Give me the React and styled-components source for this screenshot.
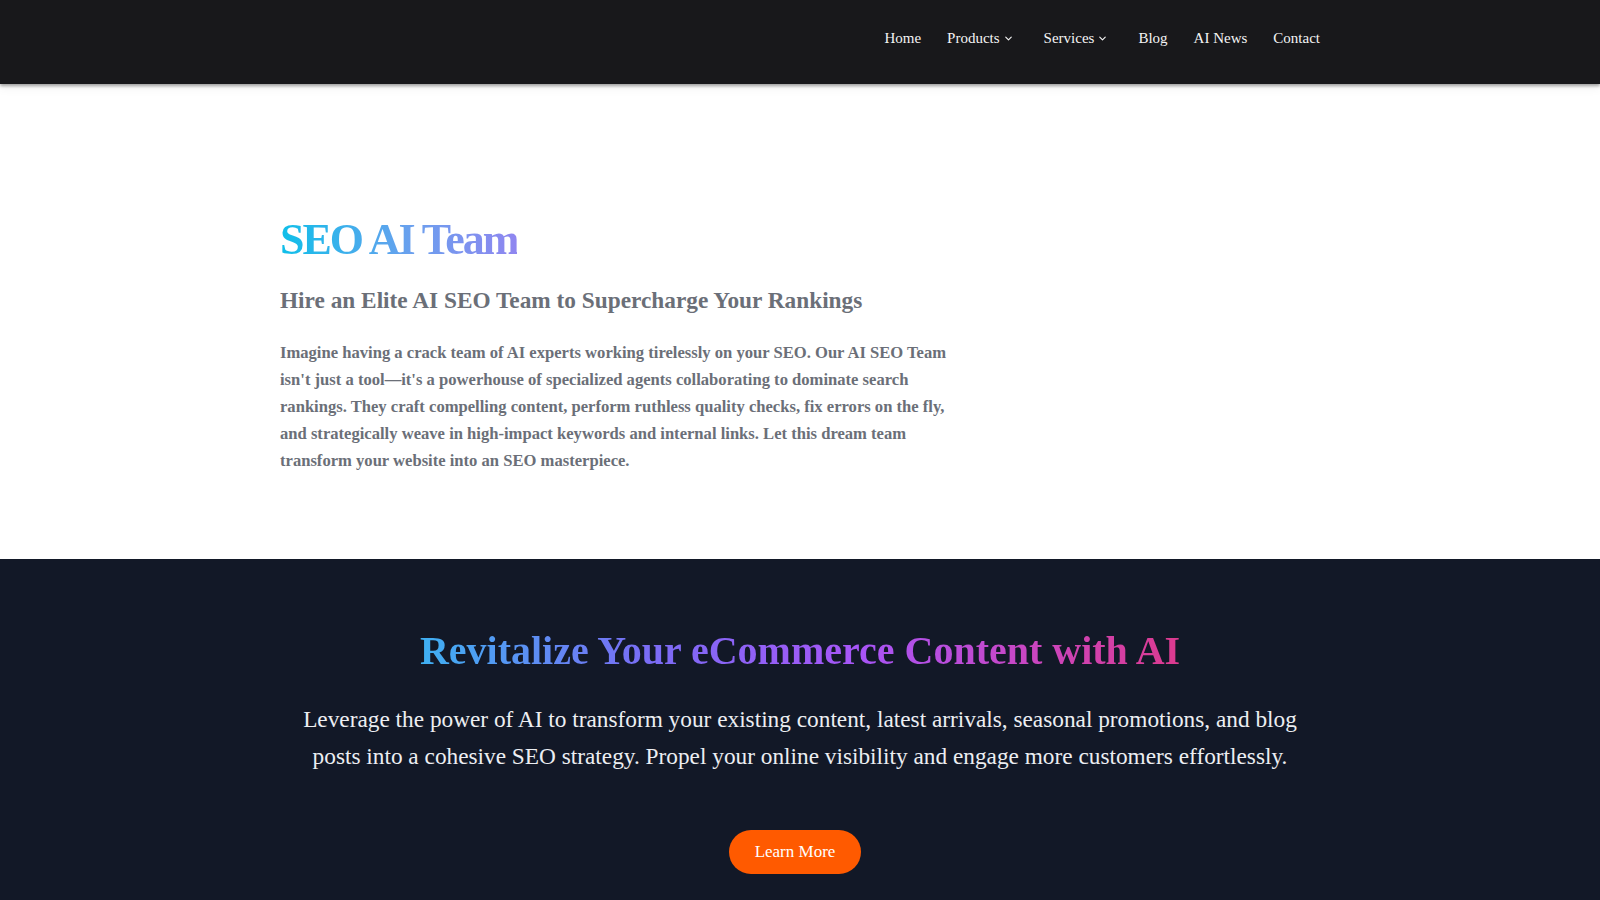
import styled, { createGlobalStyle } from 'styled-components';
import { ChevronDown } from 'lucide-react';

const GlobalStyle = createGlobalStyle`
  html, body {
    margin: 0;
    padding: 0;
    background: #ffffff;
    font-family: "Liberation Serif", "Times New Roman", serif;
  }
  * {
    box-sizing: border-box;
  }
`;

const Header = styled.header`
  background: #18181b;
  height: 84px;
  box-shadow: 0 2px 3px rgba(0, 0, 0, 0.35), 0 4px 10px rgba(0, 0, 0, 0.06);
  position: relative;
  z-index: 2;
`;

const HeaderInner = styled.div`
  width: 1040px;
  margin: 0 auto;
  height: 100%;
  display: flex;
  align-items: center;
  justify-content: flex-end;
  padding-bottom: 8px;
`;

const NavList = styled.nav`
  display: flex;
  align-items: center;
  gap: 26px;
`;

const NavLink = styled.a`
  display: flex;
  align-items: center;
  gap: 3px;
  color: #f4f4f5;
  font-size: 15px;
  text-decoration: none;
  margin-right: ${p => (p.$dropdown ? '4px' : '0')};

  svg {
    margin-top: 1px;
  }
`;

const Hero = styled.section`
  height: 475px;
  padding-top: 130px;
`;

const HeroInner = styled.div`
  width: 1040px;
  margin: 0 auto;
`;

const HeroText = styled.div`
  max-width: 680px;
`;

const Title = styled.h1`
  display: inline-block;
  margin: 0;
  font-size: 44px;
  line-height: 1.2;
  font-weight: 700;
  letter-spacing: -0.045em;
  background: linear-gradient(90deg, #0fbfe9 0%, #6aa0ee 55%, #8f86f0 100%);
  -webkit-background-clip: text;
  background-clip: text;
  color: transparent;
`;

const Subtitle = styled.h2`
  margin: 18px 0 0;
  font-size: 23.3px;
  line-height: 1.3;
  font-weight: 700;
  color: #6b6f78;
`;

const Lead = styled.p`
  margin: 24px 0 0;
  font-size: 16.6px;
  line-height: 27px;
  font-weight: 700;
  color: #6b6f78;
`;

const Showcase = styled.section`
  background: #121827;
  min-height: 341px;
  padding-top: 68px;
  text-align: center;
`;

const GradientHeading = styled.h2`
  display: inline-block;
  margin: 0;
  font-size: 40px;
  line-height: 1.2;
  font-weight: 700;
  background: linear-gradient(90deg, #3fb0f2 0%, #7a6cf5 30%, #a855f7 58%, #c946c2 80%, #dc3a8e 100%);
  -webkit-background-clip: text;
  background-clip: text;
  color: transparent;
`;

const Body = styled.p`
  max-width: 1024px;
  margin: 26px auto 0;
  font-size: 23.3px;
  line-height: 37px;
  color: #eceef2;
`;

const CTA = styled.a`
  display: inline-flex;
  align-items: center;
  justify-content: center;
  margin: 55px 10px 0 0;
  height: 44px;
  padding: 0 26px;
  border-radius: 999px;
  background: #ff5a00;
  color: #ffffff;
  font-size: 17px;
  text-decoration: none;
`;

const links = [
  { label: 'Home' },
  { label: 'Products', dropdown: true },
  { label: 'Services', dropdown: true },
  { label: 'Blog' },
  { label: 'AI News' },
  { label: 'Contact' },
];

function App() {
  return (
    <>
      <GlobalStyle />
      <Header>
        <HeaderInner>
          <NavList>
            {links.map(link => (
              <NavLink key={link.label} href="#" $dropdown={link.dropdown}>
                {link.label}
                {link.dropdown && <ChevronDown size={11} strokeWidth={2.5} />}
              </NavLink>
            ))}
          </NavList>
        </HeaderInner>
      </Header>

      <Hero>
        <HeroInner>
          <HeroText>
            <Title>SEO AI Team</Title>
            <Subtitle>Hire an Elite AI SEO Team to Supercharge Your Rankings</Subtitle>
            <Lead>
              Imagine having a crack team of AI experts working tirelessly on your SEO. Our AI SEO Team
              isn't just a tool—it's a powerhouse of specialized agents collaborating to dominate search
              rankings. They craft compelling content, perform ruthless quality checks, fix errors on the
              fly, and strategically weave in high-impact keywords and internal links. Let this dream team
              transform your website into an SEO masterpiece.
            </Lead>
          </HeroText>
        </HeroInner>
      </Hero>

      <Showcase>
        <GradientHeading>Revitalize Your eCommerce Content with AI</GradientHeading>
        <Body>
          Leverage the power of AI to transform your existing content, latest arrivals, seasonal
          promotions, and blog posts into a cohesive SEO strategy. Propel your online visibility and
          engage more customers effortlessly.
        </Body>
        <CTA href="#">Learn More</CTA>
      </Showcase>
    </>
  );
}

export default App;
